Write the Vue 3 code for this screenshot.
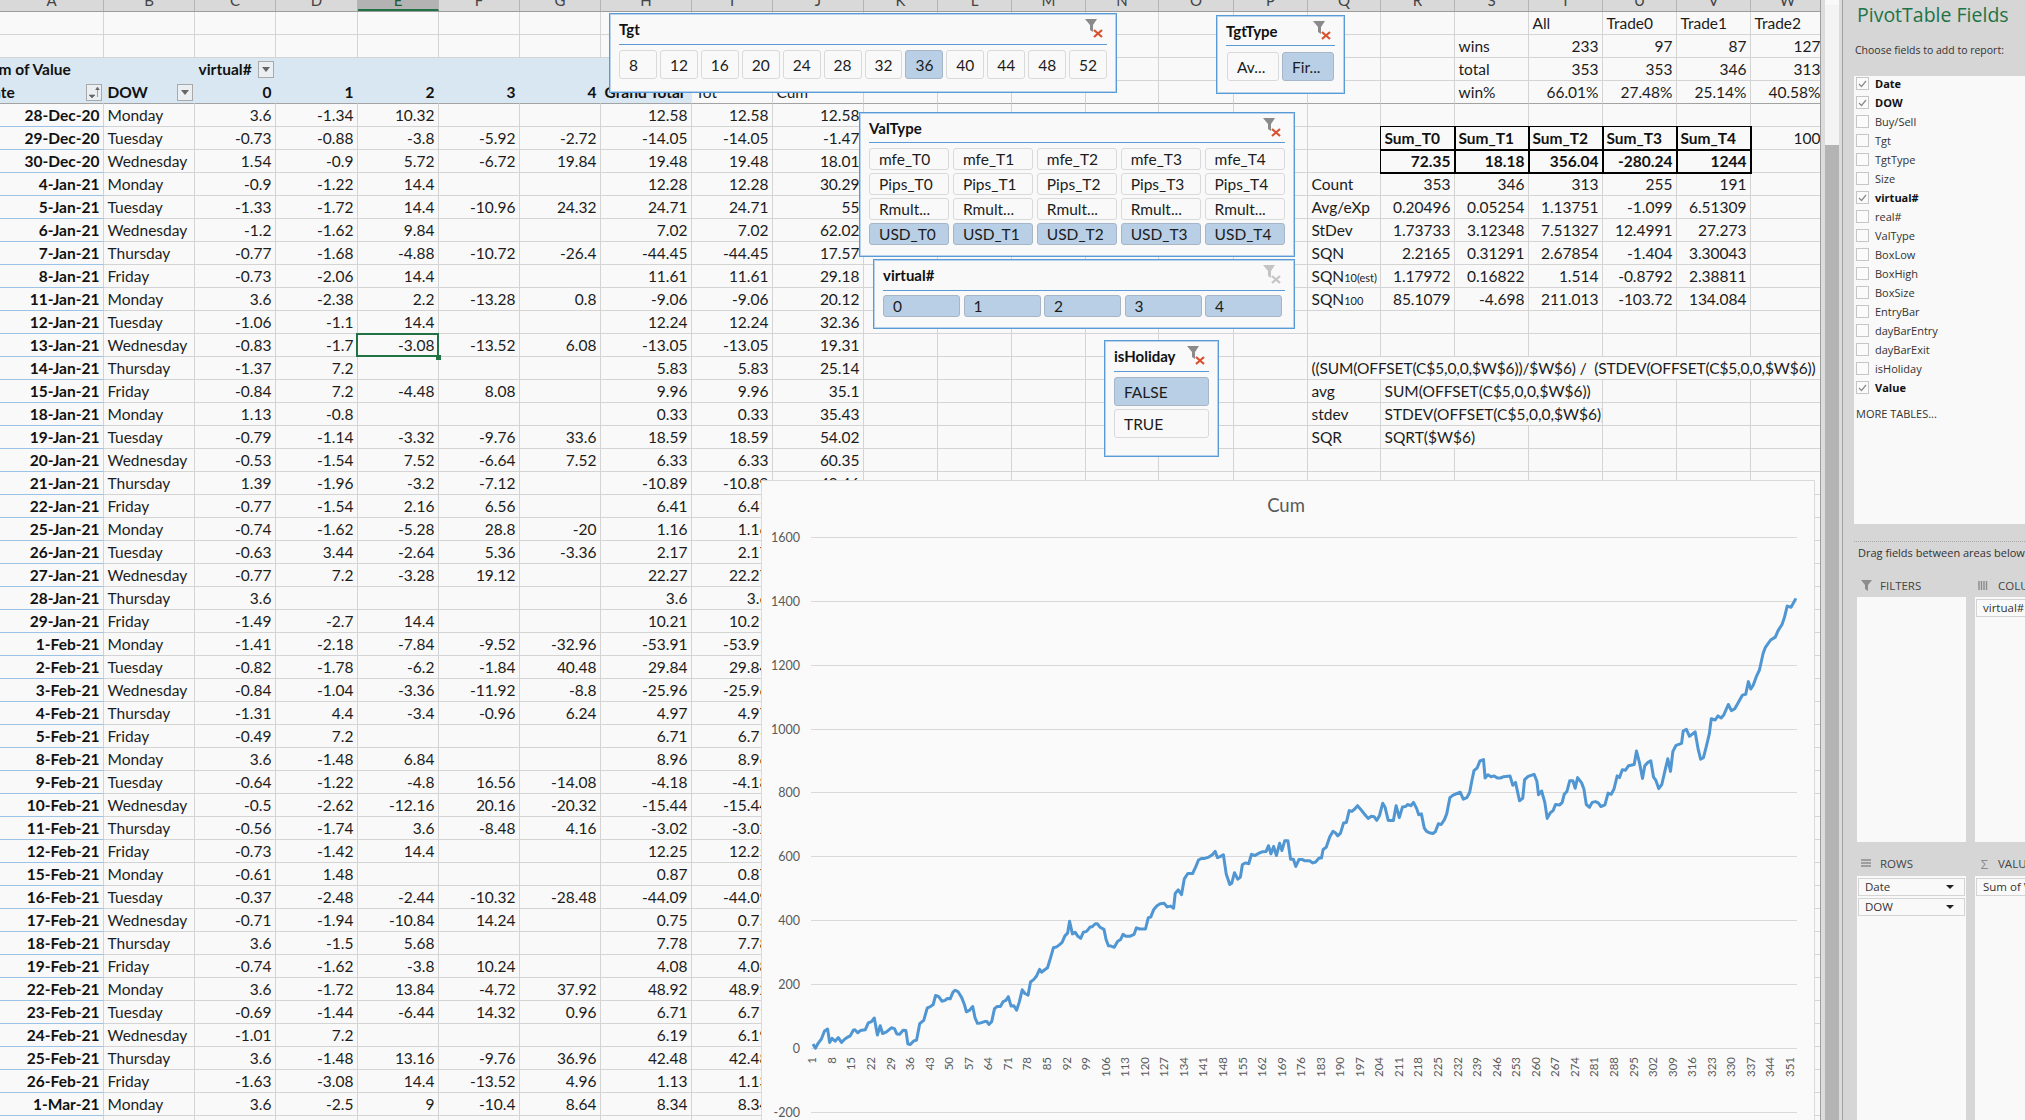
<template>
  <div class="app">
    <div class="sheet">
      <div class="colhead">
        <div v-for="c in letters" :key="c" class="ch" :class="{ on: c === 'E' }"><span>{{ c }}</span></div>
      </div>
      <div v-for="(row, i) in rows" :key="i" class="row">
        <div
          v-for="(cell, j) in row"
          :key="j"
          class="cell"
          :class="cell.cls"
          :style="cell.span ? { gridColumn: 'span ' + cell.span } : null"
        >
          <span class="txt">{{ cell.t }}<small v-if="cell.sub">{{ cell.sub }}</small></span>
          <span v-if="cell.btn" class="fbtn">
            <svg width="14" height="14" viewBox="0 0 14 14">
              <path v-if="cell.btn === 'sort'" d="M2 10h6l-3 3z M10.5 12V3 M8.5 5l2-3 2 3" fill="#666" stroke="#666" stroke-width="0.6" />
              <path v-else d="M3 5h8l-4 5z" fill="#666" />
            </svg>
          </span>
        </div>
      </div>

      <div v-for="s in slicers" :key="s.name" class="slicer" :class="s.cls">
        <div class="slicer-head">
          <span class="slicer-title">{{ s.name }}</span>
          <svg class="clear" width="20" height="20" viewBox="0 0 20 20">
            <path d="M1 1h12L9 7v7L6 12V7z" :fill="s.off ? '#c4c4c4' : '#8a8a8a'" />
            <path d="M10 12l8 7M18 12l-8 7" fill="none" :stroke="s.off ? '#c4c4c4' : '#d9502e'" stroke-width="2.2" />
          </svg>
        </div>
        <div class="btns">
          <div v-for="(b, k) in s.items" :key="k" class="btn" :class="{ picked: b.on }">{{ b.t }}</div>
        </div>
      </div>

      <div class="chart">
        <svg width="1052" height="639" viewBox="762 481 1052 639">
          <text x="1286" y="512" text-anchor="middle" class="chart-title">Cum</text>
          <g v-for="g in gridlines" :key="g.v">
            <line x1="811" x2="1797" :y1="g.y" :y2="g.y" stroke="#d9d9d9" stroke-width="1" />
            <text x="800" :y="g.y + 4" text-anchor="end" class="ylab">{{ g.v }}</text>
          </g>
          <text
            v-for="l in xlabels"
            :key="l.t"
            :transform="`rotate(-90 ${l.x} 1057)`"
            :x="l.x"
            y="1057"
            dy="4"
            text-anchor="end"
            class="xlab"
          >{{ l.t }}</text>
          <polyline :points="linePoints" fill="none" stroke="#4f96d2" stroke-width="3" stroke-linejoin="round" />
        </svg>
      </div>
    </div>

    <div class="vscroll"><div class="thumb"><div class="thumb-top"></div></div></div>

    <div class="pane">
      <div class="pane-title">PivotTable Fields</div>
      <div class="choose">Choose fields to add to report:</div>
      <div class="fieldbox">
        <div class="fields">
          <div v-for="f in fields" :key="f.t" class="field" :class="{ bold: f.on }">
            <span class="chk">
              <svg v-if="f.on" width="11" height="11" viewBox="0 0 11 11"><path d="M2 6l2.5 2.5L9 3" fill="none" stroke="#8a8a8a" stroke-width="1.2" /></svg>
            </span>
            {{ f.t }}
          </div>
        </div>
        <div class="more">MORE TABLES...</div>
      </div>
      <div class="dragline">Drag fields between areas below:</div>
      <div class="areas">
        <div class="area">
          <div class="area-head">
            <svg class="aicon" width="13" height="13" viewBox="0 0 13 13"><path d="M1 1h11L8 6v6L5 10V6z" fill="#8c8c8c" /></svg>
            FILTERS
          </div>
          <div class="area-box tall"></div>
        </div>
        <div class="area">
          <div class="area-head">
            <svg class="aicon" width="13" height="13" viewBox="0 0 13 13"><path d="M1 2v9M3.5 2v9M6 2v9M8.5 2v9" stroke="#8c8c8c" stroke-width="1.4" /></svg>
            COLUMNS
          </div>
          <div class="area-box tall"><div class="pill">virtual#</div></div>
        </div>
        <div class="area low">
          <div class="area-head">
            <svg class="aicon" width="13" height="13" viewBox="0 0 13 13"><path d="M1 3h10M1 6h10M1 9h10" stroke="#8c8c8c" stroke-width="1.4" /></svg>
            ROWS
          </div>
          <div class="area-box">
            <div v-for="p in ['Date', 'DOW']" :key="p" class="pill">{{ p }}<i class="caret"></i></div>
          </div>
        </div>
        <div class="area low">
          <div class="area-head"><span class="sigma">Σ</span>VALUES</div>
          <div class="area-box"><div class="pill">Sum of Value</div></div>
        </div>
      </div>
    </div>
  </div>
</template>

<script setup>
const letters = 'ABCDEFGHIJKLMNOPQRSTUVW'.split('')

const pivot = [
  '28-Dec-20|Monday|3.6|-1.34|10.32|||12.58',
  '29-Dec-20|Tuesday|-0.73|-0.88|-3.8|-5.92|-2.72|-14.05',
  '30-Dec-20|Wednesday|1.54|-0.9|5.72|-6.72|19.84|19.48',
  '4-Jan-21|Monday|-0.9|-1.22|14.4|||12.28',
  '5-Jan-21|Tuesday|-1.33|-1.72|14.4|-10.96|24.32|24.71',
  '6-Jan-21|Wednesday|-1.2|-1.62|9.84|||7.02',
  '7-Jan-21|Thursday|-0.77|-1.68|-4.88|-10.72|-26.4|-44.45',
  '8-Jan-21|Friday|-0.73|-2.06|14.4|||11.61',
  '11-Jan-21|Monday|3.6|-2.38|2.2|-13.28|0.8|-9.06',
  '12-Jan-21|Tuesday|-1.06|-1.1|14.4|||12.24',
  '13-Jan-21|Wednesday|-0.83|-1.7|-3.08|-13.52|6.08|-13.05',
  '14-Jan-21|Thursday|-1.37|7.2||||5.83',
  '15-Jan-21|Friday|-0.84|7.2|-4.48|8.08||9.96',
  '18-Jan-21|Monday|1.13|-0.8||||0.33',
  '19-Jan-21|Tuesday|-0.79|-1.14|-3.32|-9.76|33.6|18.59',
  '20-Jan-21|Wednesday|-0.53|-1.54|7.52|-6.64|7.52|6.33',
  '21-Jan-21|Thursday|1.39|-1.96|-3.2|-7.12||-10.89',
  '22-Jan-21|Friday|-0.77|-1.54|2.16|6.56||6.41',
  '25-Jan-21|Monday|-0.74|-1.62|-5.28|28.8|-20|1.16',
  '26-Jan-21|Tuesday|-0.63|3.44|-2.64|5.36|-3.36|2.17',
  '27-Jan-21|Wednesday|-0.77|7.2|-3.28|19.12||22.27',
  '28-Jan-21|Thursday|3.6|||||3.6',
  '29-Jan-21|Friday|-1.49|-2.7|14.4|||10.21',
  '1-Feb-21|Monday|-1.41|-2.18|-7.84|-9.52|-32.96|-53.91',
  '2-Feb-21|Tuesday|-0.82|-1.78|-6.2|-1.84|40.48|29.84',
  '3-Feb-21|Wednesday|-0.84|-1.04|-3.36|-11.92|-8.8|-25.96',
  '4-Feb-21|Thursday|-1.31|4.4|-3.4|-0.96|6.24|4.97',
  '5-Feb-21|Friday|-0.49|7.2||||6.71',
  '8-Feb-21|Monday|3.6|-1.48|6.84|||8.96',
  '9-Feb-21|Tuesday|-0.64|-1.22|-4.8|16.56|-14.08|-4.18',
  '10-Feb-21|Wednesday|-0.5|-2.62|-12.16|20.16|-20.32|-15.44',
  '11-Feb-21|Thursday|-0.56|-1.74|3.6|-8.48|4.16|-3.02',
  '12-Feb-21|Friday|-0.73|-1.42|14.4|||12.25',
  '15-Feb-21|Monday|-0.61|1.48||||0.87',
  '16-Feb-21|Tuesday|-0.37|-2.48|-2.44|-10.32|-28.48|-44.09',
  '17-Feb-21|Wednesday|-0.71|-1.94|-10.84|14.24||0.75',
  '18-Feb-21|Thursday|3.6|-1.5|5.68|||7.78',
  '19-Feb-21|Friday|-0.74|-1.62|-3.8|10.24||4.08',
  '22-Feb-21|Monday|3.6|-1.72|13.84|-4.72|37.92|48.92',
  '23-Feb-21|Tuesday|-0.69|-1.44|-6.44|14.32|0.96|6.71',
  '24-Feb-21|Wednesday|-1.01|7.2||||6.19',
  '25-Feb-21|Thursday|3.6|-1.48|13.16|-9.76|36.96|42.48',
  '26-Feb-21|Friday|-1.63|-3.08|14.4|-13.52|4.96|1.13',
  '1-Mar-21|Monday|3.6|-2.5|9|-10.4|8.64|8.34'
]

// row numbers are counted from the first row under the column letters
const grid = Array.from({ length: 49 }, () => letters.map(() => ({ t: '', cls: '' })))
const put = (r, col, t, cls = '', extra = {}) => {
  const at = letters.indexOf(col)
  grid[r - 1][at] = { t, cls, ...extra }
  if (extra.span) grid[r - 1].splice(at + 1, extra.span - 1)
}
const numbers = (r, col, vals, cls = 'num') => {
  const at = letters.indexOf(col)
  vals.forEach((v, k) => put(r, letters[at + k], v, cls))
}

for (const c of 'ABCDEFGH') {
  put(3, c, '', 'blue')
  put(4, c, '', 'blue line')
}
for (const c of 'IJKLMNOPQRSTUVW') put(4, c, '', 'line')
put(3, 'A', 'Sum of Value', 'blue bold cut')
put(3, 'C', 'virtual#', 'blue bold filter', { btn: 'down' })
put(4, 'A', 'Date', 'blue line bold cut filter', { btn: 'sort' })
put(4, 'B', 'DOW', 'blue line bold filter', { btn: 'down' })
numbers(4, 'C', ['0', '1', '2', '3', '4'], 'blue line bold num')
put(4, 'H', 'Grand Total', 'blue line bold')
put(4, 'I', 'Tot', 'line')
put(4, 'J', 'Cum', 'line')

let cum = 0
pivot.forEach((line, i) => {
  const p = line.split('|')
  const r = i + 5
  put(r, 'A', p[0], 'date')
  put(r, 'B', p[1])
  numbers(r, 'C', p.slice(2))
  cum = parseFloat((cum + parseFloat(p[7])).toFixed(2))
  put(r, 'I', p[7], 'num')
  put(r, 'J', String(cum), 'num')
})
grid[14][letters.indexOf('E')].cls = 'num sel'

put(1, 'T', 'All')
put(1, 'U', 'Trade0')
put(1, 'V', 'Trade1')
put(1, 'W', 'Trade2')
put(2, 'S', 'wins')
numbers(2, 'T', ['233', '97', '87', '127'])
put(3, 'S', 'total')
numbers(3, 'T', ['353', '353', '346', '313'])
put(4, 'S', 'win%', 'line')
numbers(4, 'T', ['66.01%', '27.48%', '25.14%', '40.58%'], 'num line')

numbers(6, 'R', ['Sum_T0', 'Sum_T1', 'Sum_T2', 'Sum_T3', 'Sum_T4'], 'bold boxed')
put(6, 'W', '100', 'num')
numbers(7, 'R', ['72.35', '18.18', '356.04', '-280.24', '1244'], 'num bold boxed')

put(8, 'Q', 'Count')
numbers(8, 'R', ['353', '346', '313', '255', '191'])
put(9, 'Q', 'Avg/eXp')
numbers(9, 'R', ['0.20496', '0.05254', '1.13751', '-1.099', '6.51309'])
put(10, 'Q', 'StDev')
numbers(10, 'R', ['1.73733', '3.12348', '7.51327', '12.4991', '27.273'])
put(11, 'Q', 'SQN')
numbers(11, 'R', ['2.2165', '0.31291', '2.67854', '-1.404', '3.30043'])
put(12, 'Q', 'SQN', '', { sub: '10(est)' })
numbers(12, 'R', ['1.17972', '0.16822', '1.514', '-0.8792', '2.38811'])
put(13, 'Q', 'SQN', '', { sub: '100' })
numbers(13, 'R', ['85.1079', '-4.698', '211.013', '-103.72', '134.084'])

put(16, 'Q', '((SUM(OFFSET(C$5,0,0,$W$6))/$W$6) /\u00a0 (STDEV(OFFSET(C$5,0,0,$W$6))', 'tight', { span: 7 })
put(17, 'Q', 'avg')
put(17, 'R', 'SUM(OFFSET(C$5,0,0,$W$6))', '', { span: 3 })
put(18, 'Q', 'stdev')
put(18, 'R', 'STDEV(OFFSET(C$5,0,0,$W$6))', '', { span: 3 })
put(19, 'Q', 'SQR')
put(19, 'R', 'SQRT($W$6)', '', { span: 2 })

const rows = grid

const pick = (list, on) => list.map((t) => ({ t, on: on.includes(t) }))
const slicers = [
  {
    name: 'Tgt',
    cls: 's-tgt',
    items: pick(['8', '12', '16', '20', '24', '28', '32', '36', '40', '44', '48', '52'], ['36'])
  },
  { name: 'TgtType', cls: 's-type', items: pick(['Av...', 'Fir...'], ['Fir...']) },
  {
    name: 'ValType',
    cls: 's-val',
    items: pick(
      [
        'mfe_T0', 'mfe_T1', 'mfe_T2', 'mfe_T3', 'mfe_T4',
        'Pips_T0', 'Pips_T1', 'Pips_T2', 'Pips_T3', 'Pips_T4',
        'Rmult...', 'Rmult...', 'Rmult...', 'Rmult...', 'Rmult...',
        'USD_T0', 'USD_T1', 'USD_T2', 'USD_T3', 'USD_T4'
      ],
      ['USD_T0', 'USD_T1', 'USD_T2', 'USD_T3', 'USD_T4']
    )
  },
  { name: 'virtual#', cls: 's-virt', off: true, items: pick(['0', '1', '2', '3', '4'], ['0', '1', '2', '3', '4']) },
  { name: 'isHoliday', cls: 's-hol', items: pick(['FALSE', 'TRUE'], ['FALSE']) }
]

const yZero = 1048
const gridlines = []
for (let v = 1600; v >= -200; v -= 200) gridlines.push({ v, y: Math.round(yZero - v * 0.3194) + 0.5 })

const xlabels = []
for (let i = 1; i <= 351; i += 7) xlabels.push({ t: i, x: 811 + (i - 0.5) * 2.793 })

// traced off the reference crops: left crop starts at x=760, right crop at x=1200, both y=480
const traceLeft = '134,1382 140,1392 147,1380 155,1370 163,1350 171,1345 176,1378 182,1368 190,1375 198,1366 206,1378 214,1370 222,1365 228,1362 236,1348 240,1347 247,1354 254,1349 266,1347 274,1330 282,1327 289,1318 297,1360 304,1337 310,1356 320,1352 332,1342 340,1344 346,1357 353,1358 362,1348 369,1349 374,1382 380,1383 388,1375 396,1372 404,1332 414,1324 423,1293 430,1291 438,1285 444,1263 452,1266 460,1277 468,1275 474,1270 481,1271 488,1255 494,1250 501,1254 510,1268 517,1285 522,1303 530,1299 538,1290 544,1318 550,1331 558,1330 568,1327 574,1327 579,1334 586,1327 593,1295 600,1290 608,1290 615,1278 622,1275 628,1266 635,1289 642,1288 649,1299 656,1278 663,1249 670,1258 678,1262 684,1230 692,1224 699,1216 707,1199 712,1206 720,1200 727,1195 735,1170 742,1146 750,1144 757,1139 764,1133 771,1117 778,1110 783,1081 790,1112 797,1108 804,1118 811,1123 818,1108 826,1106 834,1096 841,1094 848,1087 853,1087 860,1096 870,1101 875,1125 881,1141 888,1142 896,1145 904,1131 912,1126 918,1113 925,1118 935,1118 946,1113 952,1097 960,1100 975,1100 982,1072 988,1071 996,1052 1004,1043 1012,1038 1022,1037 1030,1046 1038,1044 1046,1049 1050,1013 1058,1004 1066,1016 1073,977 1082,964 1094,964 1102,948 1109,931 1117,927 1125,927 1135,924 1144,918 1151,910 1157,925 1165,922 1172,918 1179,965 1188,991 1193,988 1200,962 1208,978 1215,973 1220,942 1228,938 1236,940 1243,917 1252,920 1262,914 1270,911 1280,910 1286,896 1292,916 1299,898 1306,920 1314,890 1320,908 1327,884 1335,884 1342,929 1349,929 1355,947 1363,930 1372,930 1378,933 1390,933 1398,938 1405,936 1414,926 1420,926 1424,905 1432,900 1441,874 1449,861 1455,864 1461,872 1468,865 1476,840 1483,839 1490,810 1497,812 1504,806 1511,798 1520,808 1530,820 1538,829 1546,824 1553,825 1560,834'
const traceRight = '454,822 462,792 468,802 476,834 489,834 496,798 504,827 512,801 520,800 525,795 533,798 540,790 548,805 553,820 560,818 567,852 573,861 580,864 589,866 595,862 603,842 610,844 618,832 624,818 632,778 640,772 650,768 658,765 666,782 675,778 682,765 688,735 693,712 701,705 708,688 717,685 721,730 728,722 736,727 744,725 752,730 760,730 768,727 784,725 791,748 798,741 808,786 816,780 821,734 830,726 845,721 852,738 856,771 864,762 872,790 878,829 886,815 893,810 899,795 910,796 916,790 921,770 928,763 935,737 943,737 949,755 955,729 965,742 971,757 977,795 985,802 992,790 1000,788 1007,791 1014,800 1024,796 1032,767 1040,770 1047,757 1055,725 1061,729 1068,710 1076,711 1084,700 1098,697 1104,664 1112,695 1119,731 1125,700 1133,692 1140,688 1147,728 1153,736 1160,756 1168,746 1176,712 1183,683 1190,714 1196,665 1204,650 1218,645 1222,615 1230,611 1238,628 1252,617 1260,660 1266,684 1273,680 1280,655 1288,622 1293,585 1303,588 1310,578 1318,583 1325,575 1336,550 1344,565 1352,561 1362,544 1372,527 1380,525 1387,494 1393,512 1399,503 1407,482 1415,465 1424,425 1430,410 1443,392 1455,385 1462,369 1472,354 1478,337 1485,309 1495,312 1507,290'
const toPage = (trace, left) =>
  trace.split(' ').map((pt) => {
    const [x, y] = pt.split(',').map(Number)
    return `${(x / 2.529 + left).toFixed(1)},${(y / 2.45 + 480).toFixed(1)}`
  })
const linePoints = [...toPage(traceLeft, 760), ...toPage(traceRight, 1200)].join(' ')

const fields = [
  { t: 'Date', on: true },
  { t: 'DOW', on: true },
  { t: 'Buy/Sell' },
  { t: 'Tgt' },
  { t: 'TgtType' },
  { t: 'Size' },
  { t: 'virtual#', on: true },
  { t: 'real#' },
  { t: 'ValType' },
  { t: 'BoxLow' },
  { t: 'BoxHigh' },
  { t: 'BoxSize' },
  { t: 'EntryBar' },
  { t: 'dayBarEntry' },
  { t: 'dayBarExit' },
  { t: 'isHoliday' },
  { t: 'Value', on: true }
]
</script>

<style>
html, body { margin: 0; background: #f9f9f9; overflow: hidden; }
</style>

<style scoped>
.app {
  display: flex;
  width: 2025px;
  height: 1120px;
  overflow: hidden;
  background: #f9f9f9;
  font-family: Lato, "Liberation Sans", sans-serif;
  font-size: 15.5px;
  color: #1c1c1c;
}

/* sheet */
.sheet {
  position: relative;
  width: 1820px;
  flex: none;
  overflow: hidden;
  border-right: 1px solid #a0a0a0;
}
.colhead, .row {
  display: grid;
  width: 1825px;
  grid-template-columns: 104px 91px 81px 82px 81px 81px 81px 91px 81px 91px 74px 74px 74px 73px 75px 74px 73px 74px 74px 74px 74px 74px 74px;
}
.colhead { height: 11px; background: #d9d9d9; border-bottom: 1px solid #9c9c9c; }
.ch {
  overflow: hidden;
  border-right: 1px solid #b5b5b5;
  text-align: center;
  font-size: 15px;
  line-height: 11px;
  color: #444;
}
.ch span { display: block; margin-top: -5px; }
.ch.on { background: #b3b3b3; border-bottom: 2px solid #217346; color: #1d5c38; }
.row { height: 23px; }
.cell {
  display: flex;
  align-items: center;
  box-sizing: border-box;
  height: 23px;
  padding: 0 3.5px;
  overflow: hidden;
  white-space: nowrap;
  border-right: 1px solid #d4d4d4;
  border-bottom: 1px solid #d4d4d4;
}
.num { justify-content: flex-end; }
.bold { font-weight: 700; color: #111; }
.date { justify-content: flex-end; font-weight: 700; color: #111; border-bottom-color: #9cc3e5; }
.txt small { font-size: 11px; }
.tight { letter-spacing: -0.13px; }
.blue { background: #d8e7f1; border-right-color: #d8e7f1; border-bottom-color: #d8e7f1; }
.line { border-bottom-color: #a3a3a3; }
.blue.line { border-bottom-color: #a3a3a3; }
.cut .txt { margin-left: -22px; }
.filter { padding-right: 1px; }
.fbtn {
  display: flex;
  align-items: center;
  justify-content: center;
  box-sizing: border-box;
  width: 16px;
  height: 17px;
  margin-left: auto;
  background: #eceff1;
  border: 1px solid #a9a9a9;
}
.boxed {
  position: relative;
  z-index: 1;
  border-color: #000;
  box-shadow: 0 0 0 1px #000;
}
.sel { position: relative; overflow: visible; z-index: 1; }
.sel::after {
  content: "";
  position: absolute;
  inset: -1px -1px -1px -2px;
  border: 2px solid #217346;
}
.sel::before {
  content: "";
  position: absolute;
  right: -3px;
  bottom: -4px;
  width: 5px;
  height: 5px;
  background: #217346;
  z-index: 1;
}

/* slicers */
.slicer {
  position: absolute;
  z-index: 3;
  box-sizing: border-box;
  padding: 1px 9px 0;
  background: #f9f9f9;
  border: 1px solid #5b9bd5;
  box-shadow: inset 0 0 0 1px #b7d2ec;
}
.slicer-head {
  display: flex;
  justify-content: space-between;
  box-sizing: border-box;
  height: 30px;
  padding-top: 3px;
  border-bottom: 1px solid #5b9bd5;
}
.slicer-title { font-weight: 700; font-size: 15px; line-height: 22px; color: #111; }
.clear { margin-right: 3px; }
.btns { display: grid; margin-top: 5px; }
.btn {
  display: flex;
  align-items: center;
  box-sizing: border-box;
  min-width: 0;
  padding-left: 9px;
  overflow: hidden;
  white-space: nowrap;
  background: #f9f9f9;
  border: 1px solid #d9d9d9;
  border-radius: 3px;
}
.btn.picked { background: #b8cfe6; border-color: #a6b6c6; }

.s-tgt { left: 609px; top: 13px; width: 508px; height: 80px; }
.s-tgt .btns { grid-template-columns: repeat(12, 1fr); column-gap: 3px; grid-auto-rows: 29px; }
.s-type { left: 1216px; top: 15px; width: 129px; height: 79px; }
.s-type .slicer-head { height: 29px; }
.s-type .btns { grid-template-columns: repeat(2, 52px); column-gap: 3px; grid-auto-rows: 29px; padding-left: 1px; margin-top: 6px; }
.s-val { left: 859px; top: 112px; width: 436px; height: 145px; }
.s-val .slicer-head { height: 29px; }
.s-val .btns { grid-template-columns: repeat(5, 1fr); gap: 3px 3.5px; grid-auto-rows: 22px; }
.s-virt { left: 873px; top: 259px; width: 422px; height: 70px; }
.s-virt .btns { grid-template-columns: repeat(5, 77px); column-gap: 3.5px; grid-auto-rows: 22px; margin-top: 4px; }
.s-hol { left: 1104px; top: 340px; width: 115px; height: 117px; }
.s-hol .btns { grid-auto-rows: 29px; row-gap: 3px; }

/* chart */
.chart {
  position: absolute;
  z-index: 2;
  left: 762px;
  top: 481px;
  width: 1052px;
  height: 639px;
  background: #fafafa;
  box-shadow: 0 0 0 1px #dadada;
}
.chart svg { display: block; }
.chart-title { font-size: 18.5px; fill: #595959; }
.ylab { font-size: 12.5px; fill: #595959; }
.xlab { font-size: 11.5px; fill: #595959; }

/* scrollbar between sheet and pane */
.vscroll {
  flex: none;
  box-sizing: border-box;
  width: 22px;
  padding: 0 3px 0 4px;
  border-right: 1px solid #a0a0a0;
  background: #dcdcdc;
}
.thumb { height: 100%; background: #b4b4b4; }
.thumb-top { height: 145px; background: #f3f3f3; border-top: 5px solid #f9f9f9; box-sizing: border-box; }

/* field pane */
.pane {
  flex: 1;
  min-width: 0;
  box-sizing: border-box;
  padding-left: 11px;
  overflow: hidden;
  background: #d6d6d6;
  font-family: "Open Sans", "Liberation Sans", sans-serif;
  font-size: 10.5px;
  color: #333;
}
.pane-title { height: 30px; padding-left: 3px; font-size: 19.5px; line-height: 30px; color: #217346; white-space: nowrap; }
.choose { margin-top: 12px; padding-left: 1px; line-height: 16px; white-space: nowrap; }
.fieldbox { height: 448px; margin-top: 18px; padding-left: 2px; background: #f9f9f9; font-size: 11px; }
.fields { position: relative; top: -2.5px; }
.field { display: flex; align-items: center; gap: 6px; height: 19px; white-space: nowrap; }
.field.bold { font-weight: 700; }
.chk {
  display: flex;
  align-items: center;
  justify-content: center;
  box-sizing: border-box;
  width: 13px;
  height: 13px;
  background: #fbfbfb;
  border: 1px solid #c6c6c6;
}
.more { margin-top: 7px; line-height: 16px; white-space: nowrap; }
.dragline {
  margin-top: 17px;
  margin-right: -10px;
  padding: 3px 0 0 4px;
  border-top: 1px dotted #aaa;
  line-height: 16px;
  font-size: 11px;
  white-space: nowrap;
}
.areas {
  display: grid;
  grid-template-columns: 109px 109px;
  column-gap: 9px;
  margin: 16px 0 0 3px;
}
.area-head {
  display: flex;
  align-items: center;
  height: 16px;
  padding-left: 3px;
  font-size: 11.5px;
  color: #444;
  white-space: nowrap;
}
.aicon { margin-right: 7px; flex: none; }
.sigma { width: 13px; margin-right: 7px; font-size: 13px; color: #8c8c8c; text-align: center; }
.area-box { box-sizing: border-box; margin-top: 4px; height: 270px; padding: 2px 1px; background: #f9f9f9; }
.area-box.tall { height: 245px; margin-top: 3.5px; }
.area.low { margin-top: 14px; }
.pill {
  position: relative;
  box-sizing: border-box;
  height: 18px;
  margin-bottom: 2.5px;
  padding-left: 6px;
  border: 1px solid #d4d4d4;
  line-height: 16px;
  font-size: 11.5px;
  white-space: nowrap;
  overflow: hidden;
}
.caret {
  position: absolute;
  right: 10px;
  top: 6px;
  border: 4px solid transparent;
  border-top: 4px solid #222;
}
</style>
